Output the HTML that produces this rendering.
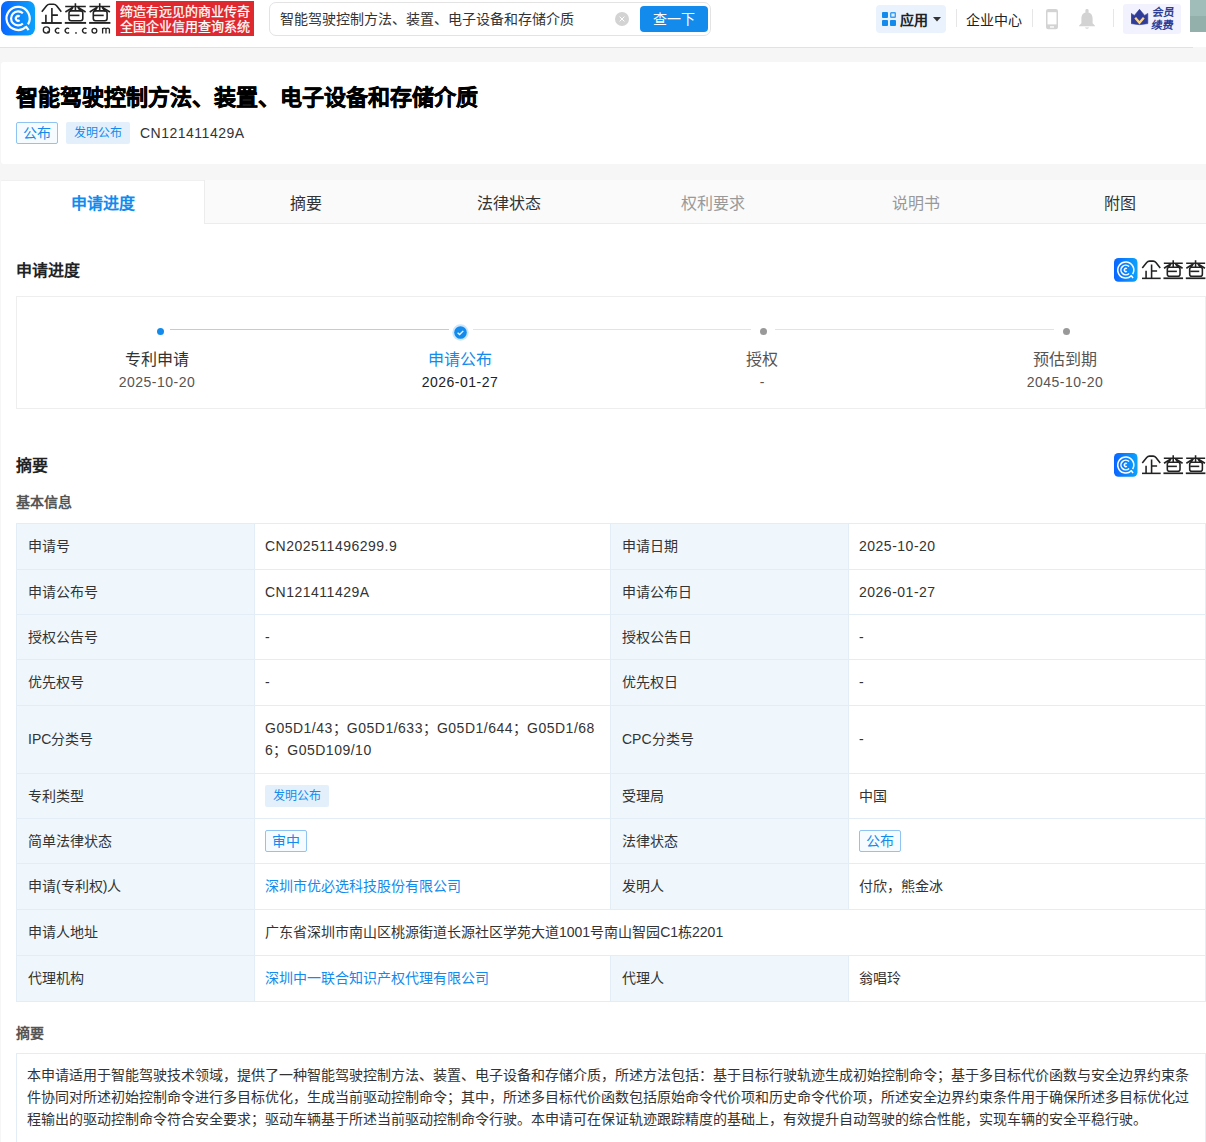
<!DOCTYPE html>
<html lang="zh-CN"><head><meta charset="utf-8">
<style>
*{margin:0;padding:0;box-sizing:border-box}
html,body{width:1206px;height:1142px;overflow:hidden}
body{position:relative;background:#f6f6f6;font-family:"Liberation Sans",sans-serif;color:#333;font-size:14px}
.a{position:absolute;white-space:nowrap}
#hdr{position:absolute;left:0;top:0;width:1206px;height:47px;background:#fff}
#hdrline{position:absolute;left:0;top:47px;width:1193px;height:1px;background:#e2e2e2}
.blue{color:#128bed}
.n{letter-spacing:.5px}
.tab{top:182px;width:203.4px;height:44px;line-height:44px;text-align:center;font-size:16px;color:#333}
.sect{font-size:16px;line-height:22px;font-weight:bold;color:#222}
.sub{font-size:14px;line-height:20px;font-weight:bold;color:#555}
.pn{top:349px;width:200px;text-align:center;font-size:16px;line-height:22px;color:#333}
.pd{top:372px;width:200px;text-align:center;font-size:14px;line-height:20px}
.lb{background:#eff7fc}
.tl{font-size:14px;line-height:22px;color:#333}
.tv{font-size:14px;line-height:22px}
.abs{font-size:14px;line-height:22px;color:#333}
.qlogo{width:92px;height:26px}

</style></head><body>
<div id="hdr">
 <svg class="a" style="left:1px;top:1px" width="34" height="35" viewBox="0 0 34 35">
  <defs><linearGradient id="lg1" x1="0" y1="0" x2="1" y2="0"><stop offset="0" stop-color="#0a66ff"/><stop offset="1" stop-color="#0aa2fb"/></linearGradient></defs>
  <rect x="0" y="0" width="34" height="34.6" rx="7" fill="url(#lg1)"/>
  <g id="rings" fill="none" stroke="#fff" stroke-width="2.2" stroke-linecap="butt">
   <path d="M27.04 23.37 A11.6 11.6 0 1 0 25.16 25.74"/>
   <path d="M24.6 25.1 L27.6 29.1"/>
   <path d="M21.87 12.28 A7 7 0 1 0 21.87 22.52"/>
   <path d="M18.6 15.6 A2.3 2.3 0 1 0 18.6 19.2"/>
  </g>
 </svg>
 <svg class="a" style="left:38px;top:0" width="76" height="38" viewBox="0 0 76 38">
  <g fill="none" stroke="#222" stroke-width="1.6" stroke-linejoin="round">
   <path d="M3.8 11.7 L8.6 5.7 Q9.8 4.3 11.6 4.3 L15.6 4.3 Q17.4 4.3 18.6 5.7 L23.3 11.7"/>
   <path d="M13.9 7.9 V23 M13.9 15.1 H19.9 M7.9 14.8 V23"/>
   <path d="M3.5 23 H23.8" stroke-width="1.9"/>
   <g id="cha">
    <path d="M27.2 6.5 H47.8 M37.4 3.2 V10.8 M35.2 7.1 L27.4 12 M39.6 7.1 L47.6 12 M35 7.2 L32.2 11.2 M39.8 7.2 L42.8 11.2"/>
    <rect x="31" y="10.9" width="13.8" height="9.9" rx="2.2"/>
    <path d="M31.6 15.4 H41.4"/>
    <path d="M26.8 22.9 H48.1" stroke-width="1.9"/>
   </g>
   <use href="#cha" x="24.3"/>
  </g>
  <g fill="none" stroke="#222" stroke-width="1.3">
   <circle cx="8.4" cy="29.95" r="3.1"/><path d="M9.6 31.2 L11.2 33"/>
   <path d="M21.3 28.8 A2.4 2.4 0 1 0 21.3 32.5"/>
   <path d="M31.1 28.8 A2.4 2.4 0 1 0 31.1 32.5"/>
   <path d="M48.5 28.8 A2.4 2.4 0 1 0 48.5 32.5"/>
   <circle cx="56.4" cy="30.7" r="2.4"/>
   <path d="M64.6 33.6 V28.1 M64.6 29.6 Q64.6 28.1 66.3 28.1 Q68 28.1 68 29.6 V33.6 M68 29.6 Q68 28.1 69.7 28.1 Q71.4 28.1 71.4 29.6 V33.6"/>
  </g>
  <circle cx="38" cy="32.9" r="0.85" fill="#222"/>
 </svg>
 <div class="a" style="left:116px;top:1px;width:138px;height:35px;background:#e0292e;color:#fff;font-size:13px;line-height:15px;padding:3px 0 0 4px;letter-spacing:0;-webkit-text-stroke:0.25px #fff">缔造有远见的商业传奇<br>全国企业信用查询系统</div>
 <div class="a" style="left:269px;top:2px;width:442px;height:34px;border:1px solid #e3e3e3;border-radius:7px;background:#fff"></div>
 <div class="a" style="left:280px;top:9px;font-size:14px;line-height:20px;color:#333">智能驾驶控制方法、装置、电子设备和存储介质</div>
 <svg class="a" style="left:615px;top:12px" width="14" height="14" viewBox="0 0 14 14"><circle cx="7" cy="7" r="7" fill="#d3d3d3"/><path d="M4.6 4.6 L9.4 9.4 M9.4 4.6 L4.6 9.4" stroke="#fff" stroke-width="1"/></svg>
 <div class="a" style="left:640px;top:6px;width:68px;height:26px;background:#128bed;border-radius:4px;color:#fff;font-size:14px;line-height:27px;text-align:center">查一下</div>
 <div class="a" style="left:876px;top:5px;width:70px;height:28px;background:#e9f2fd;border-radius:4px"></div>
 <svg class="a" style="left:882px;top:12px" width="14" height="14" viewBox="0 0 14 14"><rect x="0" y="0" width="6" height="6" rx="0.9" fill="#128bed"/><rect x="8.7" y="0.7" width="4.6" height="4.6" rx="0.6" fill="#e2eefc" stroke="#3d9ff0" stroke-width="1.4"/><rect x="0" y="8" width="6" height="6" rx="0.9" fill="#128bed"/><rect x="8" y="8" width="6" height="6" rx="0.9" fill="#128bed"/></svg>
 <div class="a" style="left:900px;top:10px;font-size:14px;line-height:20px;font-weight:bold;color:#222">应用</div>
 <svg class="a" style="left:933px;top:17px" width="8" height="5" viewBox="0 0 8 5"><path d="M0 0 H8 L4 4.5Z" fill="#333"/></svg>
 <div class="a" style="left:956px;top:9px;width:1px;height:18px;background:#e6e6e6"></div>
 <div class="a" style="left:966px;top:10px;font-size:14px;line-height:20px;color:#222">企业中心</div>
 <div class="a" style="left:1032px;top:9px;width:1px;height:18px;background:#e6e6e6"></div>
 <svg class="a" style="left:1046px;top:8.6px" width="12" height="21" viewBox="0 0 12 21"><rect x="0" y="0" width="12" height="20.3" rx="2.2" fill="#d3d3d3"/><rect x="1.5" y="3.2" width="9" height="12.2" fill="#fff"/><rect x="4" y="17.3" width="4" height="1.3" fill="#fff"/></svg>
 <svg class="a" style="left:1079px;top:8.6px" width="16" height="21" viewBox="0 0 16 21"><rect x="6.4" y="0" width="3.2" height="4" rx="1.4" fill="#d3d3d3"/><path d="M2.4 9.4 C2.4 5.6 4.6 3.2 8 3.2 C11.4 3.2 13.6 5.6 13.6 9.4 L13.6 14.2 L16 16.8 V17.3 H0 V16.8 L2.4 14.2Z" fill="#d3d3d3"/><path d="M5.8 18.4 H10.2 Q8 21.2 5.8 18.4Z" fill="#d3d3d3"/></svg>
 <div class="a" style="left:1113px;top:9px;width:1px;height:18px;background:#e6e6e6"></div>
 <div class="a" style="left:1123px;top:4px;width:58px;height:30px;background:#f1f2fd;border-radius:3px"></div>
 <svg class="a" style="left:1131px;top:9px" width="18" height="18" viewBox="0 0 18 18"><path d="M0.2 4.4 L3.4 6.4 L8.5 0.3 L13.6 6.4 L16.8 4.4 V14.6 Q8.5 16.8 0.2 14.6Z" fill="#2f3c98" stroke="#2f3c98" stroke-width="0.6" stroke-linejoin="round"/><path d="M4.2 8.8 L8.5 13.8 L12.8 8.8" fill="none" stroke="#fbd58e" stroke-width="2.3"/></svg>
 <div class="a" style="left:1152px;top:5.5px;font-size:11px;line-height:13px;font-weight:bold;transform:skewX(-8deg);color:#2e3c96">会员<br>续费</div>
 <div class="a" style="left:1190px;top:0;width:16px;height:16px;background:#a1bdb9"></div>
 <div class="a" style="left:1190px;top:16px;width:16px;height:16px;background:#93b0ab"></div>
</div>

<div id="hdrline"></div>
<!-- title card -->
<div class="a" style="left:1px;top:62px;width:1230px;height:102px;background:#fff;border-radius:3px"></div>
<div class="a" style="left:16px;top:84px;font-size:22px;line-height:28px;font-weight:bold;color:#000;-webkit-text-stroke:0.5px #000">智能驾驶控制方法、装置、电子设备和存储介质</div>
<div class="a" style="left:16px;top:122px;width:42px;height:22px;border:1px solid #8fc4f2;background:#f6fbff;border-radius:2px;color:#128bed;font-size:14px;line-height:21px;text-align:center">公布</div>
<div class="a" style="left:66px;top:122px;width:64px;height:22px;background:#e3f0fc;border-radius:2px;color:#128bed;font-size:12px;line-height:23px;text-align:center">发明公布</div>
<div class="a" style="left:140px;top:123px;font-size:14px;line-height:20px;color:#333"><span class="n">CN121411429A</span></div>

<!-- main card -->
<div class="a" style="left:1px;top:180px;width:1230px;height:1000px;background:#fff;border-radius:3px 3px 0 0"></div>
<div class="a" style="left:204px;top:180px;width:1030px;height:44px;background:#fafafa;border-left:1px solid #ececec;border-bottom:1px solid #ececec"></div>
<div class="a" style="left:1px;top:180px;width:203px;height:1px;background:#f0f0f0;border-radius:3px 0 0 0"></div>
<div class="a tab" style="left:1px;color:#128bed;font-weight:bold">申请进度</div>
<div class="a tab" style="left:204.4px">摘要</div>
<div class="a tab" style="left:407.8px">法律状态</div>
<div class="a tab" style="left:611.2px;color:#999">权利要求</div>
<div class="a tab" style="left:814.6px;color:#999">说明书</div>
<div class="a tab" style="left:1018px">附图</div>

<!-- progress -->
<div class="a sect" style="left:16px;top:260px">申请进度</div>
<div class="a qlogo" style="left:1114px;top:257px"><svg width="92" height="26" viewBox="0 0 92 26" style="position:absolute;left:0;top:0">
 <rect x="0" y="1" width="23.5" height="23.8" rx="4.5" fill="url(#lg1)"/>
 <g transform="translate(0 1) scale(0.69)"><use href="#rings"/></g>
 <g transform="translate(24.8 0.2) scale(0.92)" fill="none" stroke="#222" stroke-width="1.7" stroke-linejoin="round">
  <path d="M3.8 11.7 L8.6 5.7 Q9.8 4.3 11.6 4.3 L15.6 4.3 Q17.4 4.3 18.6 5.7 L23.3 11.7"/>
  <path d="M13.9 7.9 V23 M13.9 15.1 H19.9 M7.9 14.8 V23"/>
  <path d="M3.5 23 H23.8" stroke-width="1.7"/>
  <use href="#cha"/><use href="#cha" x="24.3"/>
 </g>
</svg></div>
<div class="a" style="left:16px;top:296px;width:1190px;height:113px;border:1px solid #eee"></div>
<div class="a" style="left:170px;top:329px;width:279px;height:1px;background:#a6d3f7"></div>
<div class="a" style="left:473px;top:329px;width:278px;height:1px;background:#e3e3e3"></div>
<div class="a" style="left:775px;top:329px;width:279px;height:1px;background:#e3e3e3"></div>
<div class="a" style="left:157px;top:328px;width:7px;height:7px;border-radius:50%;background:#128bed"></div>
<svg class="a" style="left:452px;top:324px" width="17" height="17" viewBox="0 0 17 17"><circle cx="8.5" cy="8.5" r="8.2" fill="#cfe6fb"/><circle cx="8.5" cy="8.5" r="6.3" fill="#128bed"/><path d="M5.6 8.7 L7.6 10.5 L11.3 6.9" fill="none" stroke="#fff" stroke-width="1.3"/></svg>
<div class="a" style="left:760px;top:328px;width:7px;height:7px;border-radius:50%;background:#999"></div>
<div class="a" style="left:1063px;top:328px;width:7px;height:7px;border-radius:50%;background:#999"></div>
<div class="a pn" style="left:57px">专利申请</div><div class="a pd" style="left:57px;color:#555"><span class="n">2025-10-20</span></div>
<div class="a pn" style="left:360px;color:#128bed">申请公布</div><div class="a pd" style="left:360px;color:#222"><span class="n">2026-01-27</span></div>
<div class="a pn" style="left:662px;color:#555">授权</div><div class="a pd" style="left:662px;color:#555">-</div>
<div class="a pn" style="left:965px;color:#555">预估到期</div><div class="a pd" style="left:965px;color:#555"><span class="n">2045-10-20</span></div>

<!-- abstract section -->
<div class="a sect" style="left:16px;top:455px">摘要</div>
<div class="a qlogo" style="left:1114px;top:452px"><svg width="92" height="26" viewBox="0 0 92 26" style="position:absolute;left:0;top:0">
 <rect x="0" y="1" width="23.5" height="23.8" rx="4.5" fill="url(#lg1)"/>
 <g transform="translate(0 1) scale(0.69)"><use href="#rings"/></g>
 <g transform="translate(24.8 0.2) scale(0.92)" fill="none" stroke="#222" stroke-width="1.7" stroke-linejoin="round">
  <path d="M3.8 11.7 L8.6 5.7 Q9.8 4.3 11.6 4.3 L15.6 4.3 Q17.4 4.3 18.6 5.7 L23.3 11.7"/>
  <path d="M13.9 7.9 V23 M13.9 15.1 H19.9 M7.9 14.8 V23"/>
  <path d="M3.5 23 H23.8" stroke-width="1.7"/>
  <use href="#cha"/><use href="#cha" x="24.3"/>
 </g>
</svg></div>
<div class="a sub" style="left:16px;top:492px">基本信息</div>

<!-- table -->
<div class="a" style="left:16px;top:523px;width:1190px;height:479px;background:#fff;border:1px solid #e3edf6"></div>
<div class="a lb" style="left:17px;top:524px;width:237.5px;height:45px"></div>
<div class="a lb" style="left:611px;top:524px;width:237.5px;height:45px"></div>
<div class="a lb" style="left:17px;top:570px;width:237.5px;height:44px"></div>
<div class="a lb" style="left:611px;top:570px;width:237.5px;height:44px"></div>
<div class="a" style="left:17px;top:569px;width:1188px;height:1px;background:#e3edf6"></div>
<div class="a lb" style="left:17px;top:615px;width:237.5px;height:44px"></div>
<div class="a lb" style="left:611px;top:615px;width:237.5px;height:44px"></div>
<div class="a" style="left:17px;top:614px;width:1188px;height:1px;background:#e3edf6"></div>
<div class="a lb" style="left:17px;top:660px;width:237.5px;height:45px"></div>
<div class="a lb" style="left:611px;top:660px;width:237.5px;height:45px"></div>
<div class="a" style="left:17px;top:659px;width:1188px;height:1px;background:#e3edf6"></div>
<div class="a lb" style="left:17px;top:706px;width:237.5px;height:67px"></div>
<div class="a lb" style="left:611px;top:706px;width:237.5px;height:67px"></div>
<div class="a" style="left:17px;top:705px;width:1188px;height:1px;background:#e3edf6"></div>
<div class="a lb" style="left:17px;top:774px;width:237.5px;height:44px"></div>
<div class="a lb" style="left:611px;top:774px;width:237.5px;height:44px"></div>
<div class="a" style="left:17px;top:773px;width:1188px;height:1px;background:#e3edf6"></div>
<div class="a lb" style="left:17px;top:819px;width:237.5px;height:44px"></div>
<div class="a lb" style="left:611px;top:819px;width:237.5px;height:44px"></div>
<div class="a" style="left:17px;top:818px;width:1188px;height:1px;background:#e3edf6"></div>
<div class="a lb" style="left:17px;top:864px;width:237.5px;height:45px"></div>
<div class="a lb" style="left:611px;top:864px;width:237.5px;height:45px"></div>
<div class="a" style="left:17px;top:863px;width:1188px;height:1px;background:#e3edf6"></div>
<div class="a lb" style="left:17px;top:910px;width:237.5px;height:45px"></div>
<div class="a" style="left:17px;top:909px;width:1188px;height:1px;background:#e3edf6"></div>
<div class="a lb" style="left:17px;top:956px;width:237.5px;height:45px"></div>
<div class="a lb" style="left:611px;top:956px;width:237.5px;height:45px"></div>
<div class="a" style="left:17px;top:955px;width:1188px;height:1px;background:#e3edf6"></div>
<div class="a" style="left:254px;top:523px;width:1px;height:478px;background:#e3edf6"></div>
<div class="a" style="left:610px;top:523px;width:1px;height:46px;background:#e3edf6"></div>
<div class="a" style="left:848px;top:523px;width:1px;height:46px;background:#e3edf6"></div>
<div class="a" style="left:610px;top:569px;width:1px;height:45px;background:#e3edf6"></div>
<div class="a" style="left:848px;top:569px;width:1px;height:45px;background:#e3edf6"></div>
<div class="a" style="left:610px;top:614px;width:1px;height:45px;background:#e3edf6"></div>
<div class="a" style="left:848px;top:614px;width:1px;height:45px;background:#e3edf6"></div>
<div class="a" style="left:610px;top:659px;width:1px;height:46px;background:#e3edf6"></div>
<div class="a" style="left:848px;top:659px;width:1px;height:46px;background:#e3edf6"></div>
<div class="a" style="left:610px;top:705px;width:1px;height:68px;background:#e3edf6"></div>
<div class="a" style="left:848px;top:705px;width:1px;height:68px;background:#e3edf6"></div>
<div class="a" style="left:610px;top:773px;width:1px;height:45px;background:#e3edf6"></div>
<div class="a" style="left:848px;top:773px;width:1px;height:45px;background:#e3edf6"></div>
<div class="a" style="left:610px;top:818px;width:1px;height:45px;background:#e3edf6"></div>
<div class="a" style="left:848px;top:818px;width:1px;height:45px;background:#e3edf6"></div>
<div class="a" style="left:610px;top:863px;width:1px;height:46px;background:#e3edf6"></div>
<div class="a" style="left:848px;top:863px;width:1px;height:46px;background:#e3edf6"></div>
<div class="a" style="left:610px;top:955px;width:1px;height:46px;background:#e3edf6"></div>
<div class="a" style="left:848px;top:955px;width:1px;height:46px;background:#e3edf6"></div>
<div class="a tl" style="left:28px;top:535.0px">申请号</div>
<div class="a tv" style="left:265px;top:535.0px;color:#333"><span class="n">CN202511496299.9</span></div>
<div class="a tl" style="left:622px;top:535.0px">申请日期</div>
<div class="a tv" style="left:859px;top:535.0px;color:#333"><span class="n">2025-10-20</span></div>
<div class="a tl" style="left:28px;top:580.5px">申请公布号</div>
<div class="a tv" style="left:265px;top:580.5px;color:#333"><span class="n">CN121411429A</span></div>
<div class="a tl" style="left:622px;top:580.5px">申请公布日</div>
<div class="a tv" style="left:859px;top:580.5px;color:#333"><span class="n">2026-01-27</span></div>
<div class="a tl" style="left:28px;top:625.5px">授权公告号</div>
<div class="a tv" style="left:265px;top:625.5px;color:#333">-</div>
<div class="a tl" style="left:622px;top:625.5px">授权公告日</div>
<div class="a tv" style="left:859px;top:625.5px;color:#333">-</div>
<div class="a tl" style="left:28px;top:671.0px">优先权号</div>
<div class="a tv" style="left:265px;top:671.0px;color:#333">-</div>
<div class="a tl" style="left:622px;top:671.0px">优先权日</div>
<div class="a tv" style="left:859px;top:671.0px;color:#333">-</div>
<div class="a tl" style="left:28px;top:728.0px">IPC分类号</div>
<div class="a tv" style="left:265px;top:717.0px;line-height:22px;color:#333"><span class="n">G05D1/43</span>；<span class="n">G05D1/633</span>；<span class="n">G05D1/644</span>；<span class="n">G05D1/68</span><br><span class="n">6</span>；<span class="n">G05D109/10</span></div>
<div class="a tl" style="left:622px;top:728.0px">CPC分类号</div>
<div class="a tv" style="left:859px;top:728.0px;color:#333">-</div>
<div class="a tl" style="left:28px;top:784.5px">专利类型</div>
<div class="a" style="left:265px;top:784.5px;width:64px;height:22px;background:#e3f0fc;border-radius:2px;color:#128bed;font-size:12px;line-height:23px;text-align:center">发明公布</div>
<div class="a tl" style="left:622px;top:784.5px">受理局</div>
<div class="a tv" style="left:859px;top:784.5px;color:#333">中国</div>
<div class="a tl" style="left:28px;top:829.5px">简单法律状态</div>
<div class="a" style="left:265px;top:829.5px;width:42px;height:22px;border:1px solid #8fc4f2;background:#f6fbff;border-radius:2px;color:#128bed;font-size:14px;line-height:21px;text-align:center">审中</div>
<div class="a tl" style="left:622px;top:829.5px">法律状态</div>
<div class="a" style="left:859px;top:829.5px;width:42px;height:22px;border:1px solid #8fc4f2;background:#f6fbff;border-radius:2px;color:#128bed;font-size:14px;line-height:21px;text-align:center">公布</div>
<div class="a tl" style="left:28px;top:875.0px">申请(专利权)人</div>
<div class="a tv" style="left:265px;top:875.0px;color:#128bed">深圳市优必选科技股份有限公司</div>
<div class="a tl" style="left:622px;top:875.0px">发明人</div>
<div class="a tv" style="left:859px;top:875.0px;color:#333">付欣，熊金冰</div>
<div class="a tl" style="left:28px;top:921.0px">申请人地址</div>
<div class="a tv" style="left:265px;top:921.0px;color:#333">广东省深圳市南山区桃源街道长源社区学苑大道1001号南山智园C1栋2201</div>
<div class="a tl" style="left:28px;top:967.0px">代理机构</div>
<div class="a tv" style="left:265px;top:967.0px;color:#128bed">深圳中一联合知识产权代理有限公司</div>
<div class="a tl" style="left:622px;top:967.0px">代理人</div>
<div class="a tv" style="left:859px;top:967.0px;color:#333">翁唱玲</div>
<!-- abstract text -->
<div class="a sub" style="left:16px;top:1023px">摘要</div>
<div class="a" style="left:16px;top:1053px;width:1190px;height:120px;border:1px solid #e3edf6;background:#fff"></div>
<div class="a abs" style="left:27px;top:1064px">本申请适用于智能驾驶技术领域，提供了一种智能驾驶控制方法、装置、电子设备和存储介质，所述方法包括：基于目标行驶轨迹生成初始控制命令；基于多目标代价函数与安全边界约束条</div>
<div class="a abs" style="left:27px;top:1086px">件协同对所述初始控制命令进行多目标优化，生成当前驱动控制命令；其中，所述多目标代价函数包括原始命令代价项和历史命令代价项，所述安全边界约束条件用于确保所述多目标优化过</div>
<div class="a abs" style="left:27px;top:1108px">程输出的驱动控制命令符合安全要求；驱动车辆基于所述当前驱动控制命令行驶。本申请可在保证轨迹跟踪精度的基础上，有效提升自动驾驶的综合性能，实现车辆的安全平稳行驶。</div>

</body></html>
